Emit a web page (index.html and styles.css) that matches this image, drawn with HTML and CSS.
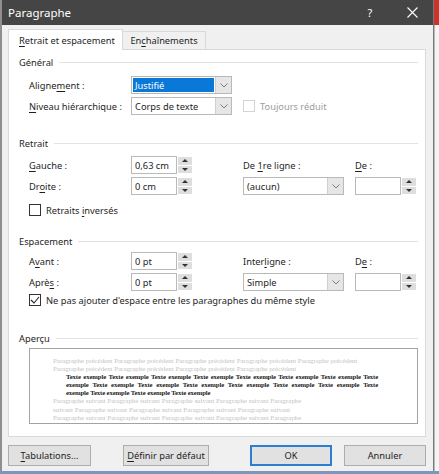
FILE: index.html
```html
<!DOCTYPE html>
<html lang="fr">
<head>
<meta charset="utf-8">
<title>Paragraphe</title>
<link rel="stylesheet" href="styles.css">
</head>
<body>
<div class="screen">
  <div class="main">
    <div class="edge-left"></div>
    <div class="dialog">
      <div class="titlebar">
        <span class="title">Paragraphe</span>
        <span class="help">?</span>
        <span class="close"><svg width="11" height="11" viewBox="0 0 11 11"><path d="M0.5 0.5 L10.5 10.5 M10.5 0.5 L0.5 10.5" stroke="#fff" stroke-width="1.1" fill="none"/></svg></span>
      </div>
      <div class="body">
        <div class="tabs">
          <div class="tab active"><u>R</u>etrait et espacement</div>
          <div class="tab">En<u>c</u>haînements</div>
        </div>
        <div class="panel">
          <section class="group">
            <div class="group-head">Général</div>
            <div class="grid g-general">
              <div class="label">Aligne<u>m</u>ent :</div>
              <div class="select focus"><span class="sel-val"><span class="hl">Justifié</span></span><span class="sel-btn"><svg width="8" height="5" viewBox="0 0 8 5"><path d="M0.5 0.5 L4 4 L7.5 0.5" stroke="#7a7a7a" fill="none"/></svg></span></div>
              <div class="cell-span"></div>
              <div class="label"><u>N</u>iveau hiérarchique :</div>
              <div class="select"><span class="sel-val">Corps de texte</span><span class="sel-btn"><svg width="8" height="5" viewBox="0 0 8 5"><path d="M0.5 0.5 L4 4 L7.5 0.5" stroke="#7a7a7a" fill="none"/></svg></span></div>
              <div class="cell-span check disabled"><span class="box"></span><span>Toujours réduit</span></div>
            </div>
          </section>

          <section class="group g2">
            <div class="group-head">Retrait</div>
            <div class="grid g-retrait">
              <div class="label"><u>G</u>auche :</div>
              <div class="spin"><span class="spin-val">0,63 cm</span><span class="spin-btns"><span class="arr up"></span><span class="arr down"></span></span></div>
              <div class="label">De <u>1</u>re ligne :</div>
              <div class="label"><u>D</u>e :</div>

              <div class="label">Dr<u>o</u>ite :</div>
              <div class="spin"><span class="spin-val">0 cm</span><span class="spin-btns"><span class="arr up"></span><span class="arr down"></span></span></div>
              <div class="select"><span class="sel-val">(aucun)</span><span class="sel-btn"><svg width="8" height="5" viewBox="0 0 8 5"><path d="M0.5 0.5 L4 4 L7.5 0.5" stroke="#7a7a7a" fill="none"/></svg></span></div>
              <div class="spin"><span class="spin-val"></span><span class="spin-btns"><span class="arr up"></span><span class="arr down"></span></span></div>

              <div class="row-span check"><span class="box"></span><span>Retraits <u>i</u>nversés</span></div>
            </div>
          </section>

          <section class="group g3">
            <div class="group-head">Espacement</div>
            <div class="grid g-espacement">
              <div class="label">A<u>v</u>ant :</div>
              <div class="spin"><span class="spin-val">0 pt</span><span class="spin-btns"><span class="arr up"></span><span class="arr down"></span></span></div>
              <div class="label">Inter<u>l</u>igne :</div>
              <div class="label">D<u>e</u> :</div>

              <div class="label">Aprè<u>s</u> :</div>
              <div class="spin"><span class="spin-val">0 pt</span><span class="spin-btns"><span class="arr up"></span><span class="arr down"></span></span></div>
              <div class="select"><span class="sel-val">Simple</span><span class="sel-btn"><svg width="8" height="5" viewBox="0 0 8 5"><path d="M0.5 0.5 L4 4 L7.5 0.5" stroke="#7a7a7a" fill="none"/></svg></span></div>
              <div class="spin"><span class="spin-val"></span><span class="spin-btns"><span class="arr up"></span><span class="arr down"></span></span></div>

              <div class="row-span check"><span class="box"><svg width="10" height="10" viewBox="0 0 10 10"><path d="M1 5 L4 8 L9 2" stroke="#222" stroke-width="1.1" fill="none"/></svg></span><span>Ne pas ajouter d'espace entre les paragraphes du même style</span></div>
            </div>
          </section>

          <section class="group g4">
            <div class="group-head">Aperçu</div>
            <div class="preview">
              <div class="pv-grey">Paragraphe précédent Paragraphe précédent Paragraphe précédent Paragraphe précédent Paragraphe précédent</div>
              <div class="pv-grey">Paragraphe précédent Paragraphe précédent Paragraphe précédent Paragraphe précédent</div>
              <div class="pv-sample">Texte exemple Texte exemple Texte exemple Texte exemple Texte exemple Texte exemple Texte exemple Texte</div>
              <div class="pv-sample">exemple Texte exemple Texte exemple Texte exemple Texte exemple Texte exemple Texte exemple Texte</div>
              <div class="pv-sample last">exemple Texte exemple Texte exemple Texte exemple</div>
              <div class="pv-grey">Paragraphe suivant Paragraphe suivant Paragraphe suivant Paragraphe suivant Paragraphe</div>
              <div class="pv-grey">suivant Paragraphe suivant Paragraphe suivant Paragraphe suivant Paragraphe suivant</div>
              <div class="pv-grey">Paragraphe suivant Paragraphe suivant Paragraphe suivant Paragraphe suivant Paragraphe</div>
              <div class="pv-grey">suivant Paragraphe suivant Paragraphe suivant Paragraphe suivant Paragraphe suivant</div>
            </div>
          </section>
        </div>
        <div class="buttons">
          <div class="btn"><span><u>T</u>abulations...</span></div>
          <div class="btn wide"><span><u>D</u>éfinir par défaut</span></div>
          <div class="btn ok"><span>OK</span></div>
          <div class="btn"><span>Annuler</span></div>
        </div>
      </div>
    </div>
    <div class="edge-right"><div class="er-top"></div><div class="er-rest"></div></div>
  </div>
  <div class="taskbar"></div>
</div>
</body>
</html>
```
FILE: styles.css
```css
* { box-sizing: border-box; margin: 0; padding: 0; }
html, body { width: 439px; height: 474px; overflow: hidden; }
body {
  font-family: "Noto Sans", "Open Sans", sans-serif;
  font-size: 9.3px;
  color: #1e1e1e;
  background: #fff;
}
u { text-decoration-thickness: 1px; text-underline-offset: 1.5px; }

.screen { display: flex; flex-direction: column; height: 474px; }
.main { display: flex; height: 471px; }
.taskbar { height: 3px; background: #7d97bb; }

.edge-left { width: 2px; background: #8f8f8f; }
.dialog {
  width: 432px;
  display: flex;
  flex-direction: column;
  background: #f0f0f0;
  border-right: 1px solid #7a7a7a;
}
.edge-right { width: 5px; display: flex; flex-direction: column; }
.er-top { height: 25px; background: #c9352b; }
.er-rest { flex: 1; background: #f4f4f4; border-left: 1px solid #b8b8b8; }

.titlebar {
  height: 25px;
  background: #454545;
  color: #fff;
  display: flex;
  align-items: center;
  padding: 0 13px 0 6px;
  font-size: 11.5px;
}
.title { flex: 1; }
.help { width: 16px; text-align: center; margin-right: 26px; font-size: 11px; }
.close { width: 16px; display: flex; justify-content: center; align-items: center; }

.body { flex: 1; padding: 4px 7px 0 6px; display: flex; flex-direction: column; }

.tabs { display: flex; align-items: flex-end; height: 21px; position: relative; z-index: 1; margin-bottom: -1px; }
.tab {
  height: 18px;
  padding: 0 8px;
  display: flex;
  align-items: center;
  border: 1px solid #d9d9d9;
  border-bottom: none;
  background: #f0f0f0;
  margin-bottom: 1px;
  white-space: nowrap;
}
.tab.active {
  height: 21px;
  width: 115px;
  padding-left: 10px;
  background: #fff;
  margin-bottom: 0;
}
.tab + .tab { border-left: none; width: 83px; justify-content: center; padding: 0; }

.panel {
  height: 388px;
  background: #fff;
  border: 1px solid #d9d9d9;
  padding: 5px 7px 0 10px;
}

.group-head { display: flex; align-items: center; height: 14px; }
.group-head::after { content: ""; flex: 1; height: 1px; background: #e3e3e3; margin-left: 6px; }
.g2 { margin-top: 21px; }
.g3 { margin-top: 12px; }
.g4 { margin-top: 25px; }

.grid {
  display: grid;
  margin-left: 10px;
  grid-template-columns: 102px 112px 112px 61px;
  row-gap: 3px;
  align-items: center;
}
.g-general { margin-top: 7px; grid-template-rows: 18px 18px; }
.g-retrait { margin-top: 6px; grid-template-rows: 18px 18px 24px; }
.g-espacement { margin-top: 4px; grid-template-rows: 18px 18px 12px; }
.cell-span { grid-column: 3 / 5; }
.row-span { grid-column: 1 / 5; }
.label { white-space: nowrap; }

.select {
  width: 101px;
  height: 18px;
  border: 1px solid #b9b9b9;
  display: flex;
  background: #fff;
}
.sel-val { flex: 1; display: flex; align-items: center; padding-left: 3px; }
.select.focus .sel-val { padding: 1px; }
.hl { flex: 1; align-self: stretch; background: #0a78d7; color: #fff; display: flex; align-items: center; padding-left: 2px; }
.sel-btn {
  width: 16px;
  background: #e6e6e6;
  border-left: 1px solid #cfcfcf;
  display: flex;
  align-items: center;
  justify-content: center;
}

.spin {
  width: 61px;
  height: 18px;
  display: flex;
}
.spin-val {
  width: 46px;
  border: 1px solid #b9b9b9;
  display: flex;
  align-items: center;
  padding-left: 3px;
  background: #fff;
}
.spin-btns {
  width: 15px;
  display: flex;
  flex-direction: column;
  gap: 1px;
  background: #fff;
  padding: 1px 0 1px 1px;
}
.arr { flex: 1; background: #dedede; display: flex; align-items: center; justify-content: center; }
.arr::before { content: ""; width: 0; height: 0; border-left: 3px solid transparent; border-right: 3px solid transparent; }
.arr.up::before { border-bottom: 3px solid #333; }
.arr.down::before { border-top: 3px solid #333; }

.check { display: flex; align-items: center; gap: 5px; white-space: nowrap; }
.check .box {
  width: 12px;
  height: 12px;
  border: 1px solid #333;
  background: #fff;
  display: flex;
  align-items: center;
  justify-content: center;
}
.check.disabled { color: #9d9d9d; margin-top: 0; }
.check.disabled .box { border-color: #d3d3d3; }

.preview {
  margin: 3px 0 0 10px;
  width: 389px;
  height: 76px;
  border: 1px solid #a3a3a3;
  background: #fff;
  overflow: hidden;
  padding: 8px 0 0 23px;
  font-family: "Liberation Serif", "Times New Roman", serif;
  font-size: 6.9px;
  line-height: 8.1px;
}
.pv-grey { color: #c3c3c3; white-space: nowrap; }
.pv-sample {
  width: 312px;
  margin-left: 13px;
  color: #1a1a1a;
  font-weight: bold;
  font-size: 6.7px;
  letter-spacing: -0.1px;
  text-align: justify;
  text-align-last: justify;
  white-space: nowrap;
}
.pv-sample.last { text-align-last: left; }

.buttons { display: flex; margin-top: 8px; height: 21px; }
.btn {
  width: 83px;
  height: 21px;
  border: 1px solid #adadad;
  background: #e1e1e1;
  display: flex;
  align-items: center;
  justify-content: center;
}
.btn.wide { width: 86px; margin-left: 32px; }
.btn.ok { width: 82px; margin-left: auto; border: 2px solid #2a7fd0; }
.btn.ok + .btn { width: 82px; margin-left: 12px; }
```
